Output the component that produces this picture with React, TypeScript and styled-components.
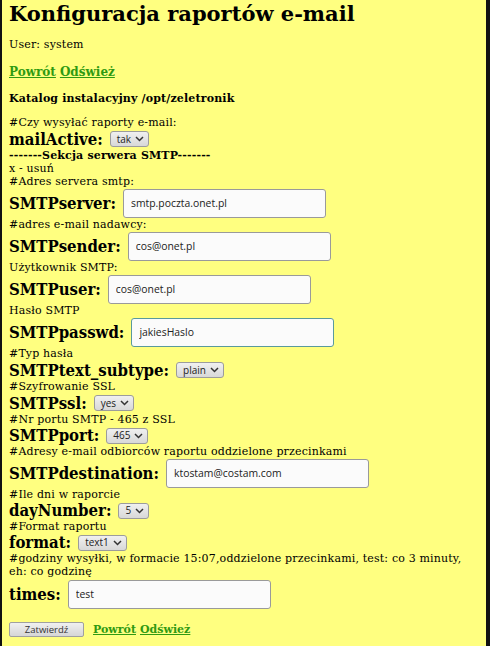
import React from "react";
import styled, { createGlobalStyle } from "styled-components";

const Global = createGlobalStyle`
  html, body { margin: 0; padding: 0; background: #111; }
  body { font-family: "DejaVu Serif", serif; color: #000; }
`;

const Page = styled.div`
  margin: 0 4px 0 2px;
  min-height: 100vh;
  box-sizing: border-box;
  background: #ffff80;
  padding: 1px 7px 8px 7px;
  font-family: "DejaVu Serif", serif;
  font-size: 11px;
  line-height: 13px;
  letter-spacing: 0.16px;
`;

const Title = styled.h1`
  margin: 0;
  font-size: 21px;
  line-height: 26px;
  font-weight: bold;
  letter-spacing: 0;
`;

const Line = styled.div<{ $top?: number; $bold?: boolean }>`
  margin-top: ${(p) => p.$top ?? 0}px;
  font-weight: ${(p) => (p.$bold ? "bold" : "normal")};
`;

const Links = styled.div<{ $top?: number }>`
  margin-top: ${(p) => p.$top ?? 0}px;
  display: flex;
  align-items: center;
  gap: 4px;
`;

const Link = styled.a<{ $size: number }>`
  color: #2f9a12;
  text-decoration: underline;
  font-weight: bold;
  font-size: ${(p) => p.$size}px;
  letter-spacing: 0;
  cursor: pointer;
`;

const Field = styled.div<{ $h: number }>`
  display: flex;
  align-items: center;
  gap: 7px;
  height: ${(p) => p.$h}px;
`;

const Label = styled.label`
  font-family: "DejaVu Serif Condensed", "DejaVu Serif", serif;
  font-stretch: semi-condensed;
  font-size: 16.6px;
  font-weight: bold;
  line-height: 19px;
  letter-spacing: 0;
  white-space: nowrap;
`;

const TextInput = styled.input<{ $focus?: boolean }>`
  box-sizing: border-box;
  width: 203px;
  height: 29px;
  padding: 0 7px;
  border: 1px solid ${(p) => (p.$focus ? "#5a9a9c" : "#9a9a9a")};
  border-radius: 3px;
  background: #fbfbfb;
  font-family: "Open Sans", sans-serif;
  font-size: 10.4px;
  letter-spacing: 0;
  color: #222;
  outline: none;
`;

const SelectBox = styled.span`
  display: inline-flex;
  align-items: center;
  gap: 4px;
  box-sizing: border-box;
  height: 16px;
  padding: 0 4px 0 6px;
  border: 1px solid #9c9c9c;
  border-radius: 3px;
  background: linear-gradient(#f0f0f0, #d8d8d8);
  font-family: "Open Sans", sans-serif;
  font-size: 10px;
  letter-spacing: 0;
  color: #222;
`;

const Chevron = () => (
  <svg width="9" height="6" viewBox="0 0 9 6">
    <path d="M1 1 L4.5 4.5 L8 1" fill="none" stroke="#333" strokeWidth="1.5" />
  </svg>
);

const Select = ({ value }: { value: string }) => (
  <SelectBox>
    {value}
    <Chevron />
  </SelectBox>
);

const Actions = styled.div`
  display: flex;
  align-items: center;
  gap: 9px;
  margin-top: 12px;
`;

const Button = styled.button`
  box-sizing: border-box;
  width: 75px;
  height: 15px;
  padding: 0;
  border: 1px solid #a0a0a0;
  border-radius: 2px;
  background: linear-gradient(#f0f0f0, #d6d6d6);
  font-family: "Open Sans", sans-serif;
  font-size: 9.5px;
  letter-spacing: 0;
  color: #333;
  line-height: 13px;
`;

const LinkPair = ({ top, size }: { top?: number; size: number }) => (
  <Links $top={top}>
    <Link $size={size}>Powrót</Link>
    <Link $size={size}>Odśwież</Link>
  </Links>
);

export default function App() {
  return (
    <>
      <Global />
      <Page>
        <Title>Konfiguracja raportów e-mail</Title>
        <Line $top={11}>User: system</Line>
        <LinkPair top={15} size={12} />
        <Line $top={13} $bold>
          Katalog instalacyjny /opt/zeletronik
        </Line>
        <Line $top={11}>#Czy wysyłać raporty e-mail:</Line>
        <Field $h={20}>
          <Label>mailActive:</Label>
          <Select value="tak" />
        </Field>
        <Line $bold>-------Sekcja serwera SMTP-------</Line>
        <Line>x - usuń</Line>
        <Line>#Adres servera smtp:</Line>
        <Field $h={30}>
          <Label>SMTPserver:</Label>
          <TextInput defaultValue="smtp.poczta.onet.pl" />
        </Field>
        <Line>#adres e-mail nadawcy:</Line>
        <Field $h={30}>
          <Label>SMTPsender:</Label>
          <TextInput defaultValue="cos@onet.pl" />
        </Field>
        <Line>Użytkownik SMTP:</Line>
        <Field $h={30}>
          <Label>SMTPuser:</Label>
          <TextInput defaultValue="cos@onet.pl" />
        </Field>
        <Line>Hasło SMTP</Line>
        <Field $h={30}>
          <Label>SMTPpasswd:</Label>
          <TextInput $focus defaultValue="jakiesHaslo" />
        </Field>
        <Line>#Typ hasła</Line>
        <Field $h={20}>
          <Label>SMTPtext_subtype:</Label>
          <Select value="plain" />
        </Field>
        <Line>#Szyfrowanie SSL</Line>
        <Field $h={20}>
          <Label>SMTPssl:</Label>
          <Select value="yes" />
        </Field>
        <Line>#Nr portu SMTP - 465 z SSL</Line>
        <Field $h={19}>
          <Label>SMTPport:</Label>
          <Select value="465" />
        </Field>
        <Line>#Adresy e-mail odbiorców raportu oddzielone przecinkami</Line>
        <Field $h={30}>
          <Label>SMTPdestination:</Label>
          <TextInput defaultValue="ktostam@costam.com" />
        </Field>
        <Line>#Ile dni w raporcie</Line>
        <Field $h={19}>
          <Label>dayNumber:</Label>
          <Select value="5" />
        </Field>
        <Line>#Format raportu</Line>
        <Field $h={19}>
          <Label>format:</Label>
          <Select value="text1" />
        </Field>
        <Line>
          #godziny wysyłki, w formacie 15:07,oddzielone przecinkami, test: co 3 minuty, eh: co godzinę
        </Line>
        <Field $h={32}>
          <Label>times:</Label>
          <TextInput defaultValue="test" />
        </Field>
        <Actions>
          <Button>Zatwierdź</Button>
          <LinkPair size={11} />
        </Actions>
      </Page>
    </>
  );
}
